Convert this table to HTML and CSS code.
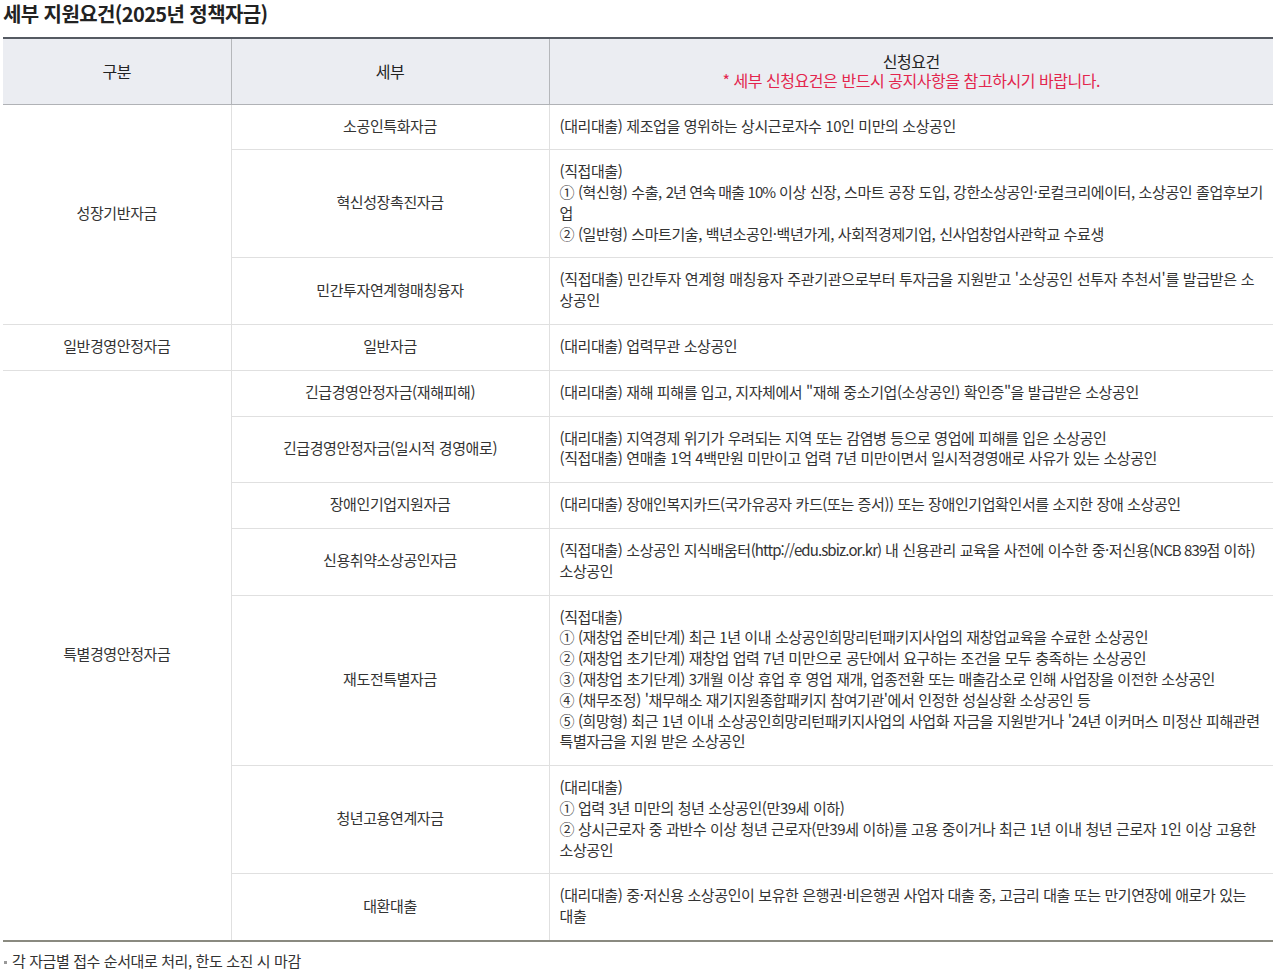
FILE: index.html
```html
<!DOCTYPE html>
<html lang="ko">
<head>
<meta charset="utf-8">
<title>세부 지원요건</title>
<link rel="stylesheet" href="styles.css">
</head>
<body>
<div class="wrap">
  <h2 class="title">세부 지원요건(2025년 정책자금)</h2>
  <table class="req">
    <colgroup>
      <col class="c1"><col class="c2"><col class="c3">
    </colgroup>
    <thead>
      <tr>
        <th>구분</th>
        <th>세부</th>
        <th>신청요건<br><span class="notice">* 세부 신청요건은 반드시 공지사항을 참고하시기 바랍니다.</span></th>
      </tr>
    </thead>
    <tbody>
      <tr>
        <td rowspan="3" class="cat">성장기반자금</td>
        <td class="sub">소공인특화자금</td>
        <td class="desc">(대리대출) 제조업을 영위하는 상시근로자수 10인 미만의 소상공인</td>
      </tr>
      <tr>
        <td class="sub">혁신성장촉진자금</td>
        <td class="desc">(직접대출)<br>① (혁신형) 수출, <span class="lat">2년 연속 매출 10%</span> 이상 신장, 스마트 공장 도입, 강한소상공인·로컬크리에이터, 소상공인 졸업후보기업<br>② (일반형) 스마트기술, 백년소공인·백년가게, 사회적경제기업, 신사업창업사관학교 수료생</td>
      </tr>
      <tr>
        <td class="sub">민간투자연계형매칭융자</td>
        <td class="desc wide">(직접대출) 민간투자 연계형 매칭융자 주관기관으로부터 투자금을 지원받고 '소상공인 선투자 추천서'를 발급받은 소상공인</td>
      </tr>
      <tr>
        <td class="cat">일반경영안정자금</td>
        <td class="sub">일반자금</td>
        <td class="desc">(대리대출) 업력무관 소상공인</td>
      </tr>
      <tr>
        <td rowspan="7" class="cat">특별경영안정자금</td>
        <td class="sub">긴급경영안정자금(재해피해)</td>
        <td class="desc">(대리대출) 재해 피해를 입고, 지자체에서 "재해 중소기업(소상공인) 확인증"을 발급받은 소상공인</td>
      </tr>
      <tr>
        <td class="sub">긴급경영안정자금(일시적 경영애로)</td>
        <td class="desc">(대리대출) 지역경제 위기가 우려되는 지역 또는 감염병 등으로 영업에 피해를 입은 소상공인<br>(직접대출) 연매출 1억 4백만원 미만이고 업력 7년 미만이면서 일시적경영애로 사유가 있는 소상공인</td>
      </tr>
      <tr>
        <td class="sub">장애인기업지원자금</td>
        <td class="desc">(대리대출) 장애인복지카드(국가유공자 카드(또는 증서)) 또는 장애인기업확인서를 소지한 장애 소상공인</td>
      </tr>
      <tr>
        <td class="sub">신용취약소상공인자금</td>
        <td class="desc">(직접대출) 소상공인 지식배움터<span class="lat">(http://edu.sbiz.or.kr)</span> 내 신용관리 교육을 사전에 이수한 중·저신용<span class="lat">(NCB 839</span>점 이하) 소상공인</td>
      </tr>
      <tr>
        <td class="sub">재도전특별자금</td>
        <td class="desc">(직접대출)<br>① (재창업 준비단계) 최근 1년 이내 소상공인희망리턴패키지사업의 재창업교육을 수료한 소상공인<br>② (재창업 초기단계) 재창업 업력 7년 미만으로 공단에서 요구하는 조건을 모두 충족하는 소상공인<br>③ (재창업 초기단계) 3개월 이상 휴업 후 영업 재개, 업종전환 또는 매출감소로 인해 사업장을 이전한 소상공인<br>④ (채무조정) '채무해소 재기지원종합패키지 참여기관'에서 인정한 성실상환 소상공인 등<br>⑤ (희망형) 최근 1년 이내 소상공인희망리턴패키지사업의 사업화 자금을 지원받거나 '24년 이커머스 미정산 피해관련 특별자금을 지원 받은 소상공인</td>
      </tr>
      <tr>
        <td class="sub">청년고용연계자금</td>
        <td class="desc">(대리대출)<br>① 업력 3년 미만의 청년 소상공인(만39세 이하)<br>② 상시근로자 중 과반수 이상 청년 근로자(만39세 이하)를 고용 중이거나 최근 1년 이내 청년 근로자 1인 이상 고용한 소상공인</td>
      </tr>
      <tr>
        <td class="sub">대환대출</td>
        <td class="desc">(대리대출) 중·저신용 소상공인이 보유한 은행권·비은행권 사업자 대출 중, 고금리 대출 또는 만기연장에 애로가 있는 대출</td>
      </tr>
    </tbody>
  </table>
  <p class="foot">각 자금별 접수 순서대로 처리, 한도 소진 시 마감</p>
</div>
</body>
</html>
```

FILE: styles.css
```css
* { box-sizing: border-box; }
html, body { margin: 0; padding: 0; background: #fff; }
body {
  font-family: "Noto Sans CJK KR", "Noto Sans", sans-serif;
  color: #333;
}
.wrap { width: 1273px; padding-left: 3px; }
.title {
  margin: 0;
  height: 37px;
  padding-top: 2px;
  font-size: 20px;
  line-height: 24px;
  font-weight: 700;
  color: #222;
  letter-spacing: -0.6px;
}
.req {
  width: 1270px;
  border-collapse: collapse;
  table-layout: fixed;
  border-top: 2px solid #555a62;
  border-bottom: 2px solid #8a8a80;
  font-size: 15px;
  line-height: 20.8px;
  letter-spacing: -0.4px;
}
.c1 { width: 228px; }
.c2 { width: 318px; }
.c3 { width: 724px; }
.req th {
  background: #ebedf2;
  font-weight: 400;
  color: #222;
  height: 66px;
  padding: 0;
  text-align: center;
  vertical-align: middle;
  border-left: 1px solid #b5b7bb;
  border-bottom: 1px solid #b0b2b6;
  font-size: 16px;
  line-height: 19px;
  letter-spacing: -0.45px;
}
.req th:first-child { border-left: 0; }
.notice { color: #e3254d; font-size: 16px; }
.req td {
  border-left: 1px solid #e0e0e0;
  border-top: 1px solid #e0e0e0;
  padding: 11px 10px 13px;
  vertical-align: middle;
}
.req td.cat { border-left: 0; text-align: center; }
.req td.sub { text-align: center; }
.req td.desc { text-align: left; }
.req td.wide { letter-spacing: -0.3px; }
.req tbody tr:first-child td { border-top: 0; }
.lat { letter-spacing: -0.9px; }
.foot {
  margin: 9px 0 0;
  font-size: 15px;
  line-height: 20px;
  letter-spacing: -0.4px;
  color: #333;
  position: relative;
  padding-left: 9px;
}
.foot::before {
  content: "";
  position: absolute;
  left: 1px;
  top: 10px;
  width: 3px;
  height: 3px;
  background: #999;
}
```
